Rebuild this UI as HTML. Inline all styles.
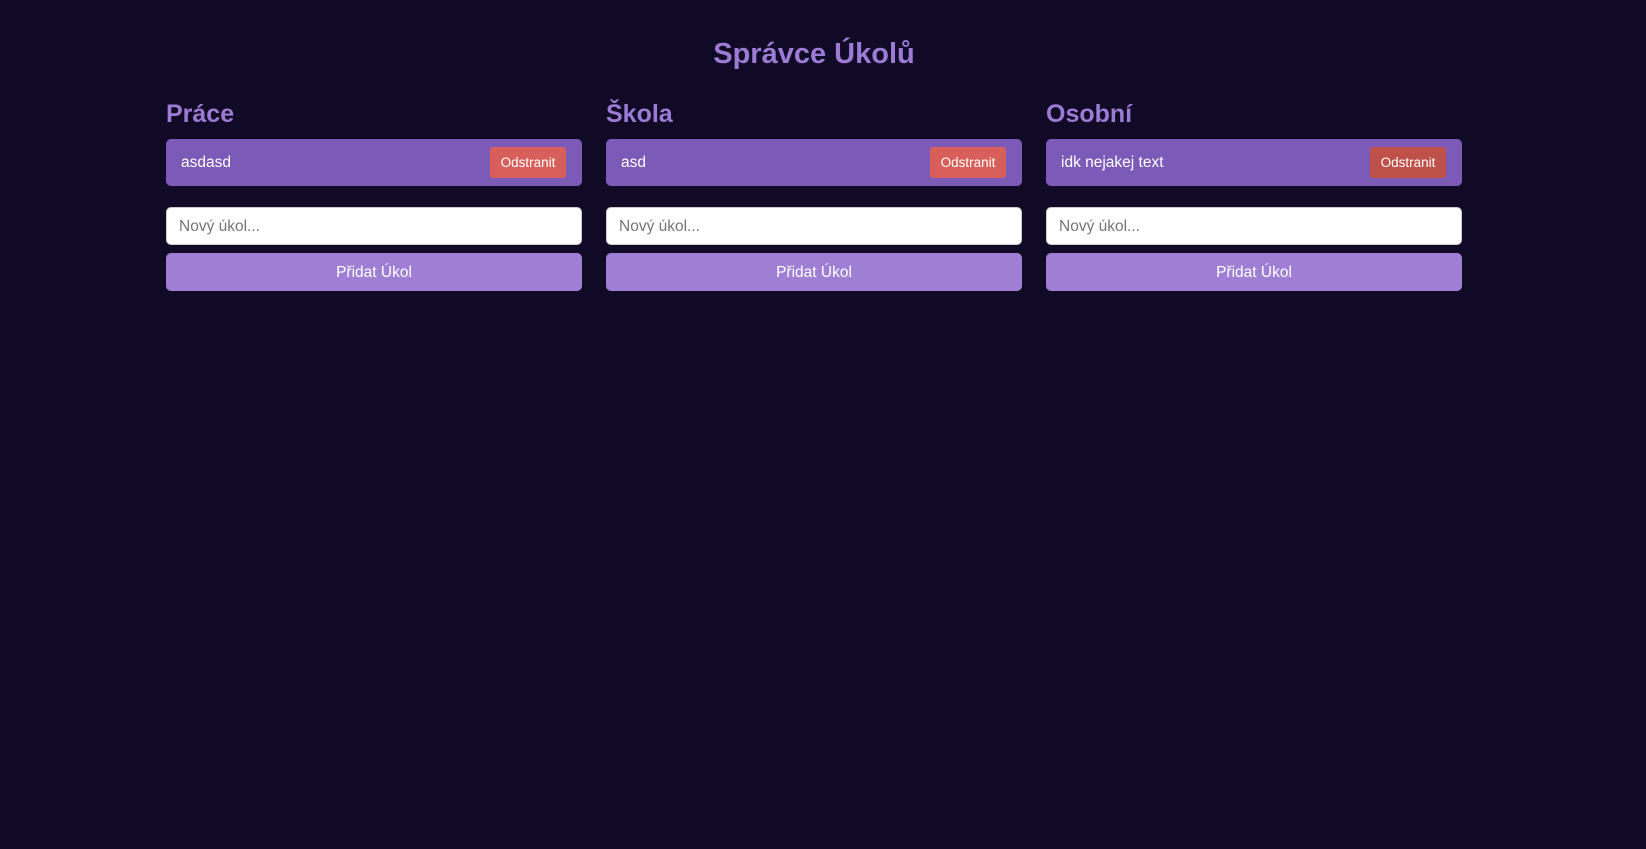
<!DOCTYPE html>
<html><head><meta charset="utf-8"><style>
*{box-sizing:border-box;margin:0;padding:0}
body{width:1646px;height:849px;background:#100a26;font-family:"Segoe UI","Liberation Sans",sans-serif;position:relative;overflow:hidden}
h1{position:absolute;top:38px;left:0;width:1628px;text-align:center;color:#9b7bd4;font-size:29px;font-weight:600}
.col{position:absolute;top:0;width:416px}
h2{position:absolute;top:100px;color:#9b7bd4;font-size:25px;font-weight:600}
.card{position:absolute;top:139px;width:416px;height:47px;background:#7c5ab8;border-radius:5px;color:#fff;font-size:15.5px;padding:0 0 0 15px;line-height:47px}
.del{position:absolute;right:16px;top:8px;width:76px;height:31px;background:#d9605a;border-radius:3px;color:#fff;font-size:13.5px;line-height:31px;text-align:center}
.inp{position:absolute;top:207px;width:416px;height:38px;background:#fff;border:1px solid #ccc;border-radius:5px;color:#757575;font-size:15.5px;line-height:38px;padding-left:12px}
.btn{position:absolute;top:253px;width:416px;height:38px;background:#9e7fd4;border-radius:5px;color:#fff;font-size:15.5px;line-height:40px;text-align:center}
</style></head><body>
<h1>Správce Úkolů</h1>
<div class="col" style="left:166px">
<h2>Práce</h2>
<div class="card">asdasd<div class="del">Odstranit</div></div>
<div class="inp">Nový úkol...</div>
<div class="btn">Přidat Úkol</div>
</div>
<div class="col" style="left:606px">
<h2>Škola</h2>
<div class="card">asd<div class="del">Odstranit</div></div>
<div class="inp">Nový úkol...</div>
<div class="btn">Přidat Úkol</div>
</div>
<div class="col" style="left:1046px">
<h2>Osobní</h2>
<div class="card">idk nejakej text<div class="del" style="background:#c0504a">Odstranit</div></div>
<div class="inp">Nový úkol...</div>
<div class="btn">Přidat Úkol</div>
</div>
</body></html>
